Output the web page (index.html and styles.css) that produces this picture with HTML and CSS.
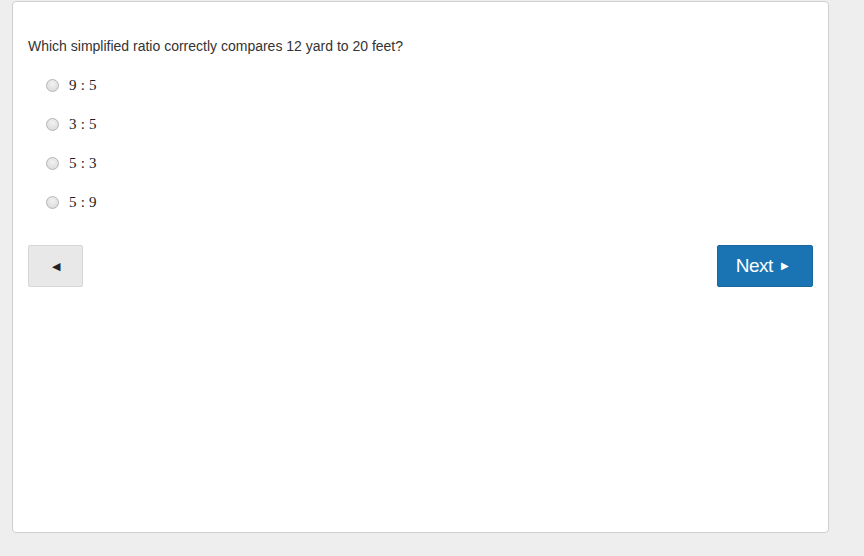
FILE: index.html
```html
<!DOCTYPE html>
<html lang="en">
<head>
  <meta charset="UTF-8" />
  <meta name="viewport" content="width=device-width, initial-scale=1" />
  <title>Question</title>
  <link rel="stylesheet" href="styles.css">
</head>
<body>

<div class="card">
  <p class="question">Which simplified ratio correctly compares 12 yard to 20 feet?</p>

  <div class="choices">
    <label class="choice"><input type="radio" name="ans" /><span class="math">9 : 5</span></label>
    <label class="choice"><input type="radio" name="ans" /><span class="math">3 : 5</span></label>
    <label class="choice"><input type="radio" name="ans" /><span class="math">5 : 3</span></label>
    <label class="choice"><input type="radio" name="ans" /><span class="math">5 : 9</span></label>
  </div>

  <div class="buttons">
    <button class="btn-prev">&#9664;</button>
    <button class="btn-next">Next <span class="arrow">&#9654;</span></button>
  </div>
</div>

</body>
</html>
```

FILE: styles.css
```css
body {
  margin: 0;
  background: #eeeeee;
  font-family: "Liberation Sans", Arial, sans-serif;
  color: #333;
}

.card {
  box-sizing: border-box;
  width: 817px;
  height: 532px;
  margin: 1px 0 0 12px;
  background: #fff;
  border: 1px solid #cfcfcf;
  border-radius: 4px;
  padding: 35px 15px 0 15px;
}

.question {
  margin: 0 0 11px;
  font-size: 14px;
  line-height: 18px;
}

.choices {
  display: flex;
  flex-direction: column;
  padding-left: 18px;
}

.choice {
  display: flex;
  align-items: center;
  height: 39px;
}

.choice input {
  appearance: none;
  -webkit-appearance: none;
  box-sizing: border-box;
  margin: 0 10px 0 0;
  width: 13px;
  height: 13px;
  border-radius: 50%;
  border: 1px solid #b5b5b5;
  background: radial-gradient(circle at 50% 35%, #f2f2f2, #d6d6d6);
}

.math {
  font-family: "Liberation Serif", "DejaVu Serif", serif;
  font-size: 15px;
  color: #222;
  letter-spacing: 0.2px;
}

.buttons {
  display: flex;
  justify-content: space-between;
  margin-top: 23px;
}

button {
  height: 42px;
  border-radius: 2px;
  cursor: pointer;
  font-family: "Liberation Sans", Arial, sans-serif;
}

.btn-prev {
  width: 55px;
  background: #e8e8e8;
  border: 1px solid #d6d6d6;
  color: #222;
  font-size: 11px;
}

.btn-next {
  width: 96px;
  background: #1a74b3;
  border: 1px solid #18679f;
  color: #fff;
  font-size: 19px;
  padding: 0 6px 0 0;
  letter-spacing: -0.5px;
}

.btn-next .arrow {
  font-size: 10px;
  vertical-align: 3px;
  margin-left: 3px;
}
```
